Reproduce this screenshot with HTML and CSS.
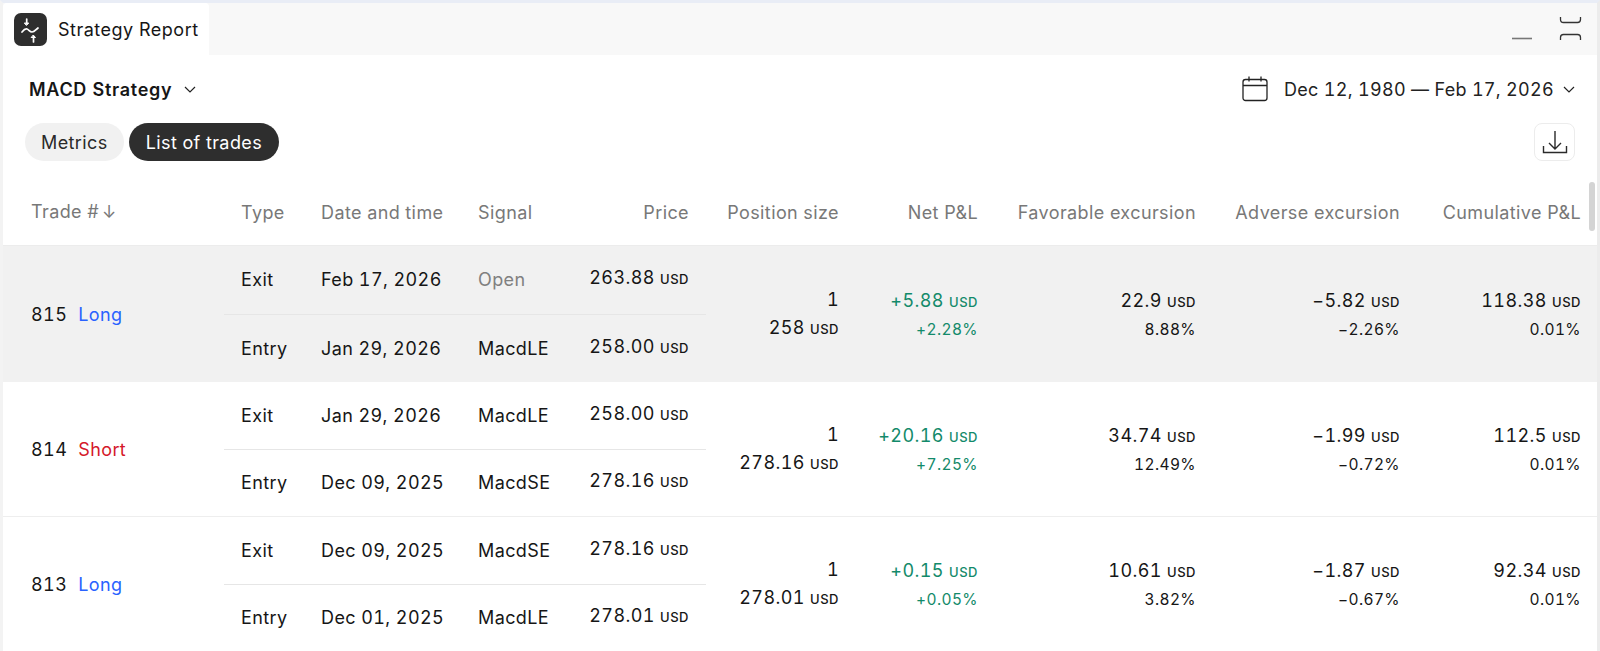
FILE: index.html
```html
<!DOCTYPE html>
<html lang="en">
<head>
    <meta charset="UTF-8">
    <title>Strategy Report</title>
    <link rel="stylesheet" href="styles.css">
</head>
<body>
    <div class="window">
        <div class="tabbar">
            <div class="tab">
                <span class="tab-logo">
                    <svg width="33" height="33" viewBox="0 0 33 33" fill="none" stroke="#fff" stroke-width="1.7" stroke-linecap="round" stroke-linejoin="round">
                        <path d="M8 19c2-2.500 3.500-3.500 5-3s3 3 5 3c2.500 0 3.500-2 6-4"/>
                        <path d="M12.700 6v3.500"/>
                        <path d="M10.700 10h4l-2 2.200z" fill="#fff" stroke-width="1"/>
                        <path d="M19.500 29v-4"/>
                        <path d="M17.500 24.500h4l-2-2.200z" fill="#fff" stroke-width="1"/>
                    </svg>
                </span>
                <span class="tab-title">Strategy Report</span>
            </div>
            <div class="win-controls">
                <svg class="win-min" width="20" height="3" viewBox="0 0 20 3"><path d="M0 1.500h20" stroke="#777" stroke-width="1.600"/></svg>
                <svg class="win-max" width="24" height="24" viewBox="0 0 24 24" fill="none" stroke="#333" stroke-width="1.300">
                    <path d="M1.500 0v2.500c0 2 1 3 3 3h14c2 0 3-1 3-3V0"/>
                    <path d="M1.500 23v-2.500c0-2 1-3 3-3h14c2 0 3 1 3 3V23"/>
                </svg>
            </div>
        </div>

        <div class="toolbar">
            <button class="strategy-name">MACD Strategy
                <svg class="chev" width="12" height="7" viewBox="0 0 12 7" fill="none" stroke="#222" stroke-width="1.200"><path d="M1 1l5 5 5-5"/></svg>
            </button>
            <div class="date-range">
                <svg class="calendar" width="26" height="26" viewBox="0 0 26 26" fill="none" stroke="#222" stroke-width="1.300">
                    <rect x="1" y="3.500" width="24" height="21" rx="2.500"/>
                    <path d="M1 9.500h24M7 0.500v5M19 0.500v5"/>
                </svg>
                <span class="date-text">Dec 12, 1980 — Feb 17, 2026</span>
                <svg class="chev" width="12" height="7" viewBox="0 0 12 7" fill="none" stroke="#222" stroke-width="1.200"><path d="M1 1l5 5 5-5"/></svg>
            </div>
        </div>

        <div class="tabs-row">
            <div class="pills">
                <span class="pill">Metrics</span>
                <span class="pill pill-active">List of trades</span>
            </div>
            <button class="download">
                <svg width="26" height="26" viewBox="0 0 26 26" fill="none" stroke="#2a2a2a" stroke-width="1.400">
                    <path d="M13 2v18M7 14l6 6 6-6"/>
                    <path d="M1.500 17v6.500h23V17"/>
                </svg>
            </button>
        </div>

        <div class="trades">
            <div class="trade-head">
                <div class="col-trade head-trade">Trade # <span class="sort">↓</span></div>
                <div class="leg">
                    <span>Type</span>
                    <span>Date and time</span>
                    <span>Signal</span>
                    <span class="num">Price</span>
                </div>
                <div class="num">Position size</div>
                <div class="num">Net P&amp;L</div>
                <div class="num">Favorable excursion</div>
                <div class="num">Adverse excursion</div>
                <div class="num">Cumulative P&amp;L</div>
            </div>

            <div class="trade trade-hover">
                <div class="col-trade">815 <span class="long">Long</span></div>
                <div class="legs">
                    <div class="leg">
                        <span>Exit</span><span>Feb 17, 2026</span><span class="muted">Open</span>
                        <span class="num price">263.88 <small>USD</small></span>
                    </div>
                    <div class="leg">
                        <span>Entry</span><span>Jan 29, 2026</span><span>MacdLE</span>
                        <span class="num price">258.00 <small>USD</small></span>
                    </div>
                </div>
                <div class="stat stat-size"><span>1</span><span>258 <small>USD</small></span></div>
                <div class="stat green"><span>+5.88 <small>USD</small></span><em>+2.28%</em></div>
                <div class="stat"><span>22.9 <small>USD</small></span><em>8.88%</em></div>
                <div class="stat"><span>−5.82 <small>USD</small></span><em>−2.26%</em></div>
                <div class="stat"><span>118.38 <small>USD</small></span><em>0.01%</em></div>
            </div>

            <div class="trade">
                <div class="col-trade">814 <span class="short">Short</span></div>
                <div class="legs">
                    <div class="leg">
                        <span>Exit</span><span>Jan 29, 2026</span><span>MacdLE</span>
                        <span class="num price">258.00 <small>USD</small></span>
                    </div>
                    <div class="leg">
                        <span>Entry</span><span>Dec 09, 2025</span><span>MacdSE</span>
                        <span class="num price">278.16 <small>USD</small></span>
                    </div>
                </div>
                <div class="stat stat-size"><span>1</span><span>278.16 <small>USD</small></span></div>
                <div class="stat green"><span>+20.16 <small>USD</small></span><em>+7.25%</em></div>
                <div class="stat"><span>34.74 <small>USD</small></span><em>12.49%</em></div>
                <div class="stat"><span>−1.99 <small>USD</small></span><em>−0.72%</em></div>
                <div class="stat"><span>112.5 <small>USD</small></span><em>0.01%</em></div>
            </div>

            <div class="trade">
                <div class="col-trade">813 <span class="long">Long</span></div>
                <div class="legs">
                    <div class="leg">
                        <span>Exit</span><span>Dec 09, 2025</span><span>MacdSE</span>
                        <span class="num price">278.16 <small>USD</small></span>
                    </div>
                    <div class="leg">
                        <span>Entry</span><span>Dec 01, 2025</span><span>MacdLE</span>
                        <span class="num price">278.01 <small>USD</small></span>
                    </div>
                </div>
                <div class="stat stat-size"><span>1</span><span>278.01 <small>USD</small></span></div>
                <div class="stat green"><span>+0.15 <small>USD</small></span><em>+0.05%</em></div>
                <div class="stat"><span>10.61 <small>USD</small></span><em>3.82%</em></div>
                <div class="stat"><span>−1.87 <small>USD</small></span><em>−0.67%</em></div>
                <div class="stat"><span>92.34 <small>USD</small></span><em>0.01%</em></div>
            </div>

            <div class="scroll-thumb"></div>
        </div>
    </div>
</body>
</html>
```

FILE: styles.css
```css
* {
    box-sizing: border-box;
}

html, body {
    margin: 0;
    height: 100%;
    overflow: hidden;
}

body {
    background-color: #fff;
    color: #161616;
    font-family: 'Inter', sans-serif;
    font-size: 18px;
    font-variant-numeric: tabular-nums;
    letter-spacing: 0.4px;
}

button {
    font: inherit;
    letter-spacing: inherit;
    color: inherit;
    background: none;
    border: 0;
    padding: 0;
}

.window {
    height: 651px;
    border-top: 3px solid #e9edf6;
    border-left: 3px solid #f3f3f3;
    border-right: 3px solid #ececec;
}

/* top tab strip */
.tabbar {
    display: flex;
    justify-content: space-between;
    height: 52px;
    background-color: #f8f8f8;
}

.tab {
    display: flex;
    align-items: center;
    gap: 11px;
    width: 206px;
    padding-left: 11px;
    background-color: #fff;
    border-radius: 4px 4px 0 0;
}

.tab-logo {
    display: flex;
    width: 33px;
    height: 33px;
    background-color: #2e2e2e;
    border-radius: 7px;
}

.tab-title {
    letter-spacing: 0.5px;
}

.win-controls {
    display: flex;
    align-items: flex-end;
    gap: 27px;
    padding: 0 14px 14px 0;
}

.win-min {
    margin-bottom: 1px;
}

/* strategy selector + date range */
.toolbar {
    display: flex;
    justify-content: space-between;
    align-items: center;
    height: 68px;
    padding: 0 22px 0 26px;
}

.strategy-name {
    display: flex;
    align-items: center;
    gap: 12px;
    font-weight: 600;
    letter-spacing: 0.7px;
}

.date-range {
    display: flex;
    align-items: center;
    gap: 9px;
    color: #222;
    letter-spacing: 0.3px;
}

.calendar {
    margin-right: 7px;
}

.tabs-row {
    display: flex;
    justify-content: space-between;
    align-items: flex-start;
    height: 59px;
    padding: 0 22px 0 22px;
}

.pills {
    display: flex;
    gap: 5px;
}

.pill {
    display: flex;
    align-items: center;
    height: 38px;
    padding: 0 16px;
    border-radius: 19px;
    background-color: #f1f1f1;
    color: #2a2a2a;
}

.pill-active {
    padding: 0 17px;
    background-color: #2e2e2e;
    color: #fff;
}

.download {
    display: flex;
    align-items: center;
    justify-content: center;
    width: 41px;
    height: 38px;
    border: 1px solid #ececec;
    border-radius: 8px;
}

/* trades table */
.trades {
    position: relative;
}

.trade-head,
.trade {
    display: grid;
    grid-template-columns: 221px 482px 149px 139px 218px 204px 181px;
}

.trade-head {
    height: 64px;
    align-items: center;
    padding-bottom: 3px;
    color: #787878;
    border-bottom: 1px solid #ececec;
}

.trade-head > .num {
    padding-right: 16px;
}

.trade {
    height: 135px;
    border-bottom: 1px solid #eee;
}

.trade-hover {
    height: 136px;
    background-color: #f1f1f1;
    border-bottom: 0;
}

.col-trade {
    display: flex;
    align-items: center;
    gap: 11px;
    padding-left: 28px;
}

.head-trade {
    gap: 3px;
    padding-bottom: 1px;
}

.sort {
    font-size: 17px;
}

.legs {
    display: flex;
    flex-direction: column;
}

.legs .leg {
    flex: 1;
}

.legs .leg + .leg {
    border-top: 1px solid #e6e6e6;
}

.leg {
    display: grid;
    grid-template-columns: 80px 157px 1fr 1fr;
    align-items: center;
    padding: 0 17px;
}

.num {
    text-align: right;
}

.price {
    padding-bottom: 4px;
}

.muted {
    color: #808080;
}

.long {
    color: #2962ff;
}

.short {
    color: #d5182a;
}

small {
    font-size: 13px;
    font-weight: 500;
    letter-spacing: 0.5px;
}

.stat {
    display: flex;
    flex-direction: column;
    justify-content: center;
    align-items: flex-end;
    gap: 9px;
    padding-right: 16px;
}

.stat-size {
    gap: 7px;
    padding-bottom: 1px;
}

.stat em {
    font-style: normal;
    font-size: 15.500px;
}

.green {
    color: #138a6a;
}

.scroll-thumb {
    position: absolute;
    top: 0;
    right: 2px;
    width: 6px;
    height: 49px;
    border-radius: 3px;
    background-color: #d4d4d4;
}
```
